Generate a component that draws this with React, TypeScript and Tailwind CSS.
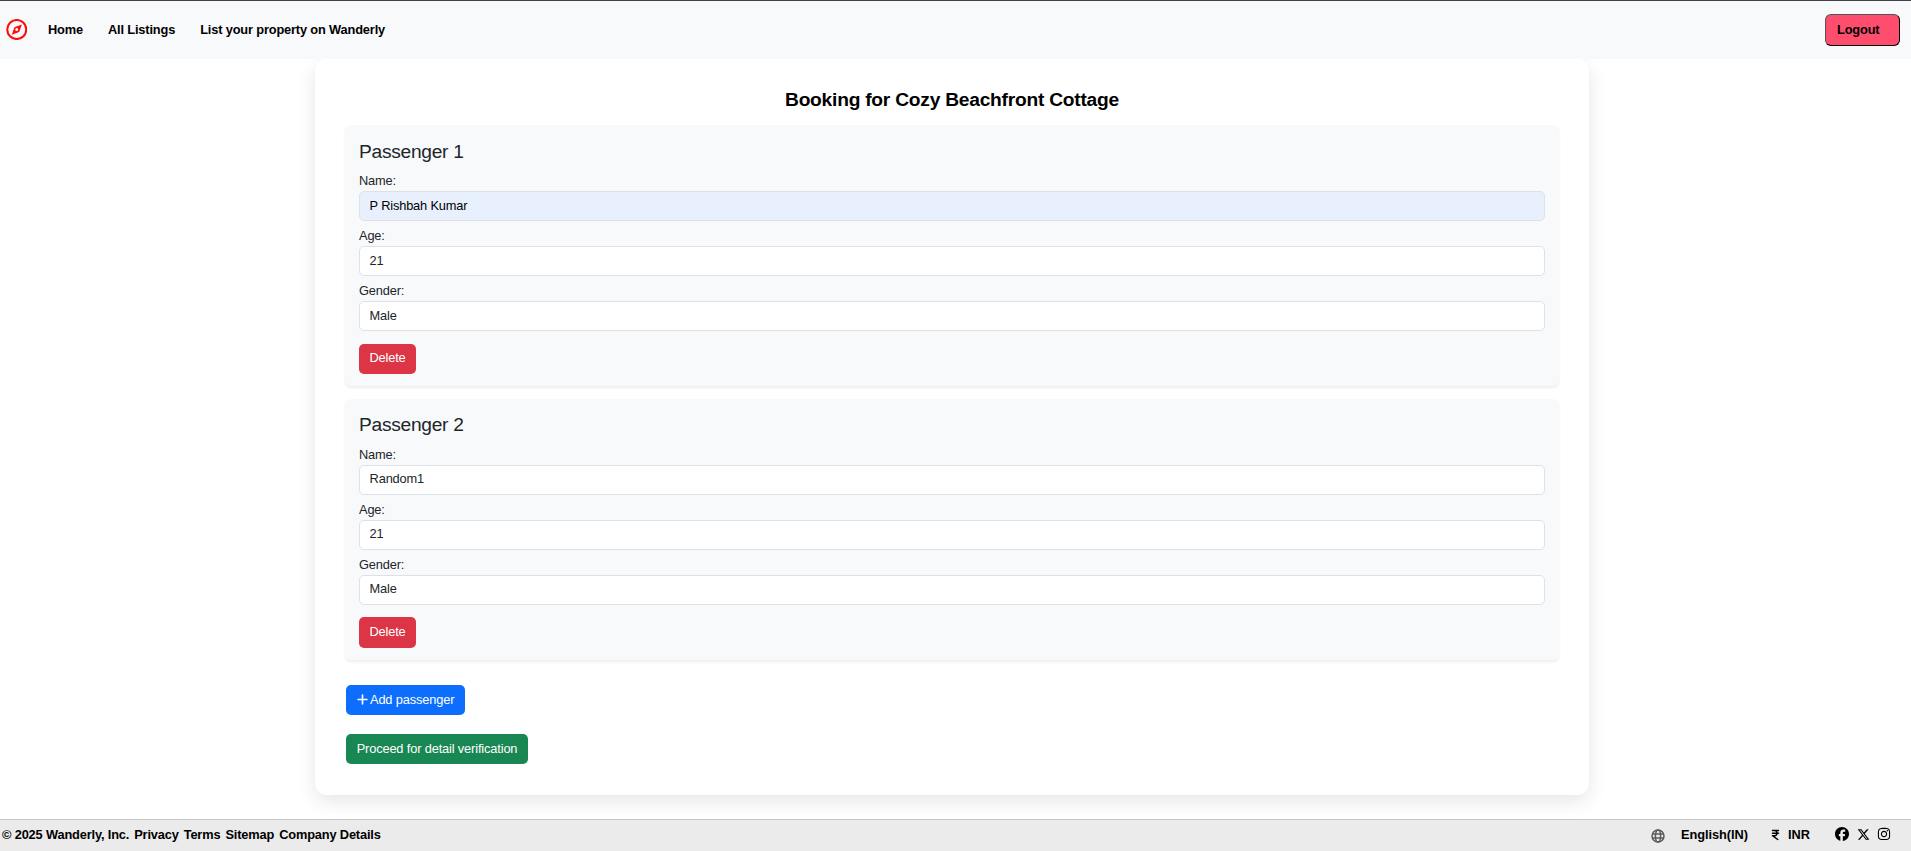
import React from "react";
import { FaFacebook, FaXTwitter, FaInstagram, FaIndianRupeeSign, FaPlus } from "react-icons/fa6";

type Passenger = { name: string; age: string; gender: string; autofilled?: boolean };

const passengers: Passenger[] = [
  { name: "P Rishbah Kumar", age: "21", gender: "Male", autofilled: true },
  { name: "Random1", age: "21", gender: "Male" },
];

function CompassLogo() {
  return (
    <svg viewBox="0 0 21 21" className="mb-px h-[21px] w-[21px] text-[#fe0d0d]" fill="none">
      <circle cx="10.75" cy="10.5" r="9.5" stroke="currentColor" strokeWidth="2.1" />
      <path
        fill="currentColor"
        fillRule="evenodd"
        d="M15.9 5.4 13.4 12.4 12.6 13.2 5.8 15.8 8.2 8.7 9 7.9ZM10.7 9a1.5 1.5 0 1 0 0 3 1.5 1.5 0 1 0 0-3Z"
      />
    </svg>
  );
}

function GlobeIcon() {
  return (
    <svg
      viewBox="0 0 14 14"
      className="mr-[16px] mt-px h-[14px] w-[14px] text-[#5c5c5c]"
      fill="none"
      stroke="currentColor"
      strokeWidth="1.5"
    >
      <circle cx="7" cy="7" r="6" />
      <ellipse cx="7" cy="7" rx="2.6" ry="6" />
      <path d="M1.4 4.9h11.2M1.4 9.1h11.2" />
    </svg>
  );
}

function Field({
  label,
  value,
  filled,
  raised,
}: {
  label: string;
  value: string;
  filled?: boolean;
  raised: boolean;
}) {
  return (
    <label className="mb-[6px] block">
      <span className="block h-[19px] leading-[18px]">{label}</span>
      <input
        defaultValue={value}
        className={
          "block h-[30px] w-full rounded-[5px] border border-[#dee2e6] px-[9.6px] tracking-[-0.15px] outline-none " +
          (raised ? "pb-[3px] " : "pb-px ") +
          (filled ? "bg-[#e8f0fe] text-black" : "bg-white")
        }
      />
    </label>
  );
}

function PassengerCard({ index, passenger }: { index: number; passenger: Passenger }) {
  const later = index > 1;
  return (
    <section className="mb-[13px] h-[261px] rounded-[6px] bg-[#f8f9fb] px-[14px] pt-[14px] shadow-[0_2px_3px_rgba(0,0,0,0.07)]">
      <h2
        className={
          "mb-[6px] h-[27px] text-[19.2px] tracking-[-0.28px] " +
          (later ? "leading-[23px]" : "leading-[25px]")
        }
      >
        Passenger {index}
      </h2>
      <Field label="Name:" value={passenger.name} filled={passenger.autofilled} raised={later} />
      <Field label="Age:" value={passenger.age} raised={later} />
      <Field label="Gender:" value={passenger.gender} raised={later} />
      <button
        className={
          "flex w-[57px] justify-center rounded-[5px] bg-[#dc3545] leading-[19px] tracking-[-0.13px] text-white " +
          (later ? "mt-[12px] h-[31px] pt-[5px]" : "mt-[13px] h-[30px] pt-[4px]")
        }
      >
        Delete
      </button>
    </section>
  );
}

export default function App() {
  return (
    <div className="flex h-[851px] flex-col overflow-hidden bg-white font-['Liberation_Sans',Arial,sans-serif] text-[12.8px] tracking-[-0.14px] text-[#212529]">
      <header className="flex h-[59px] shrink-0 items-center border-t border-[#3f4249] bg-[#f8f9fb] pl-[6px] pr-[11px] font-bold tracking-[-0.15px] text-black">
        <CompassLogo />
        <nav className="ml-[21px] flex gap-[25px]">
          <a>Home</a>
          <a>All Listings</a>
          <a>List your property on Wanderly</a>
        </nav>
        <button className="ml-auto h-8 w-[75px] rounded-[6px] border border-black border-l-[#555] border-t-[#555] bg-[#ff4d6d] pb-px pl-[11px] text-left">
          Logout
        </button>
      </header>

      <main className="flex h-[760px] shrink-0 overflow-hidden pl-[315px]">
        <div className="h-[736px] w-[1274px] rounded-[12px] bg-white px-[30px] pt-[30px] shadow-[0_6px_19px_rgba(0,0,0,0.1)]">
          <h1 className="h-9 text-center text-[19.2px] font-bold leading-[22px] tracking-[-0.235px] text-black">
            Booking for Cozy Beachfront Cottage
          </h1>
          {passengers.map((p, i) => (
            <PassengerCard key={p.name} index={i + 1} passenger={p} />
          ))}
          <div className="ml-px flex flex-col items-start gap-[19px] pt-3 text-white">
            <button className="flex h-[30px] w-[119px] items-start rounded-[5px] bg-[#0d6efd] pl-[10px] pt-[5px] leading-[19px]">
              <FaPlus className="mr-px mt-[3px] h-[13px] w-[13px]" />
              Add passenger
            </button>
            <button className="flex h-[30px] w-[182px] justify-center rounded-[5px] bg-[#198754] pt-[5px] leading-[19px]">
              Proceed for detail verification
            </button>
          </div>
        </div>
      </main>

      <footer className="flex h-8 shrink-0 items-center border-t border-[#c8c8c8] bg-[#ebebeb] pb-px pl-[2px] pr-[20px] font-bold text-black">
        <div className="flex gap-[5px] tracking-[-0.15px]">
          <span>© 2025 Wanderly, Inc.</span>
          <a>Privacy</a>
          <a>Terms</a>
          <a>Sitemap</a>
          <a>Company Details</a>
        </div>
        <div className="ml-auto flex items-center tracking-normal">
          <GlobeIcon />
          <span className="mr-[23px] tracking-[-0.06px]">English(IN)</span>
          <FaIndianRupeeSign className="mb-px mr-[8px] h-[12px] w-[9px]" />
          <span className="mr-[25px]">INR</span>
          <FaFacebook className="mb-[2px] mr-[8px] h-[14px] w-[14px]" />
          <FaXTwitter className="mb-[2px] mr-[7px] h-[13px] w-[13px]" />
          <FaInstagram className="mb-[2px] h-[14px] w-[14px]" />
        </div>
      </footer>
    </div>
  );
}
